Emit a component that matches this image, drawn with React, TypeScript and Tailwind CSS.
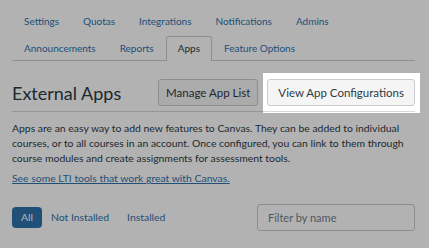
import React from "react";

const tabs = [
  "Settings",
  "Quotas",
  "Integrations",
  "Notifications",
  "Admins",
  "Announcements",
  "Reports",
  "Apps",
  "Feature Options",
];

export default function App() {
  const active = "Apps";

  return (
    <div className="relative h-[248px] w-[429px] overflow-hidden bg-white pl-3 pr-[14px] font-['Lato',sans-serif] text-[#2d3b45]">
      {/* tabs */}
      <ul className="flex flex-wrap items-end gap-y-[3px] border-b border-[#c7cdd1] pt-[9px]">
        {tabs.map((t) =>
          t === active ? (
            <li
              key={t}
              className="relative -mb-px flex h-[25px] items-center rounded-t-[3px] border border-b-0 border-[#c7cdd1] bg-white px-[11px] pb-px text-[10px] text-[#2d3b45]"
            >
              {t}
            </li>
          ) : (
            <li key={t} className="flex h-6 items-center px-3 text-[10px] text-[#2f72ad]">
              {t}
            </li>
          )
        )}
      </ul>

      {/* header */}
      <div className="flex items-center justify-between border-b border-[#d5d9dc] pb-[5px] pt-[18px]">
        <h1 className="text-[18px] leading-none">External Apps</h1>
        <div className="flex gap-[9px]">
          <button className="h-[27px] rounded-[3px] border border-[#c7cdd1] bg-[#f5f5f5] px-[7px] text-[11.5px]">
            Manage App List
          </button>
          <div className="relative">
            <button className="h-[27px] rounded-[3px] border border-[#c7cdd1] bg-[#f5f5f5] px-[10px] text-[11.5px]">
              View App Configurations
            </button>
            {/* spotlight */}
            <span className="pointer-events-none absolute -bottom-[7px] -left-1 -right-[5px] -top-1.5 shadow-[0_0_0_9999px_rgba(0,0,0,0.3)]" />
          </div>
        </div>
      </div>

      <p className="mt-[9px] text-[10.4px] leading-[15px]">
        Apps are an easy way to add new features to Canvas. They can be added to individual courses, or to all
        courses in an account. Once configured, you can link to them through course modules and create assignments
        for assessment tools.
      </p>

      <p className="mt-[5px] text-[10.4px] leading-[15px]">
        <a href="#" className="text-[#2f72ad] underline">
          See some LTI tools that work great with Canvas.
        </a>
      </p>

      {/* filters */}
      <div className="mt-[18px] flex items-center justify-between">
        <div className="flex items-center text-[10.4px]">
          <span className="flex h-[21px] items-center rounded-[4px] bg-[#2f72ad] px-[9px] text-white">All</span>
          <span className="px-[9px] text-[#2f72ad]">Not Installed</span>
          <span className="px-[9px] text-[#2f72ad]">Installed</span>
        </div>
        <input
          placeholder="Filter by name"
          className="h-[27px] w-[158px] rounded-[3px] border border-[#c7cdd1] bg-white px-[10px] text-[11px] placeholder:text-[#73818c]"
        />
      </div>
    </div>
  );
}
